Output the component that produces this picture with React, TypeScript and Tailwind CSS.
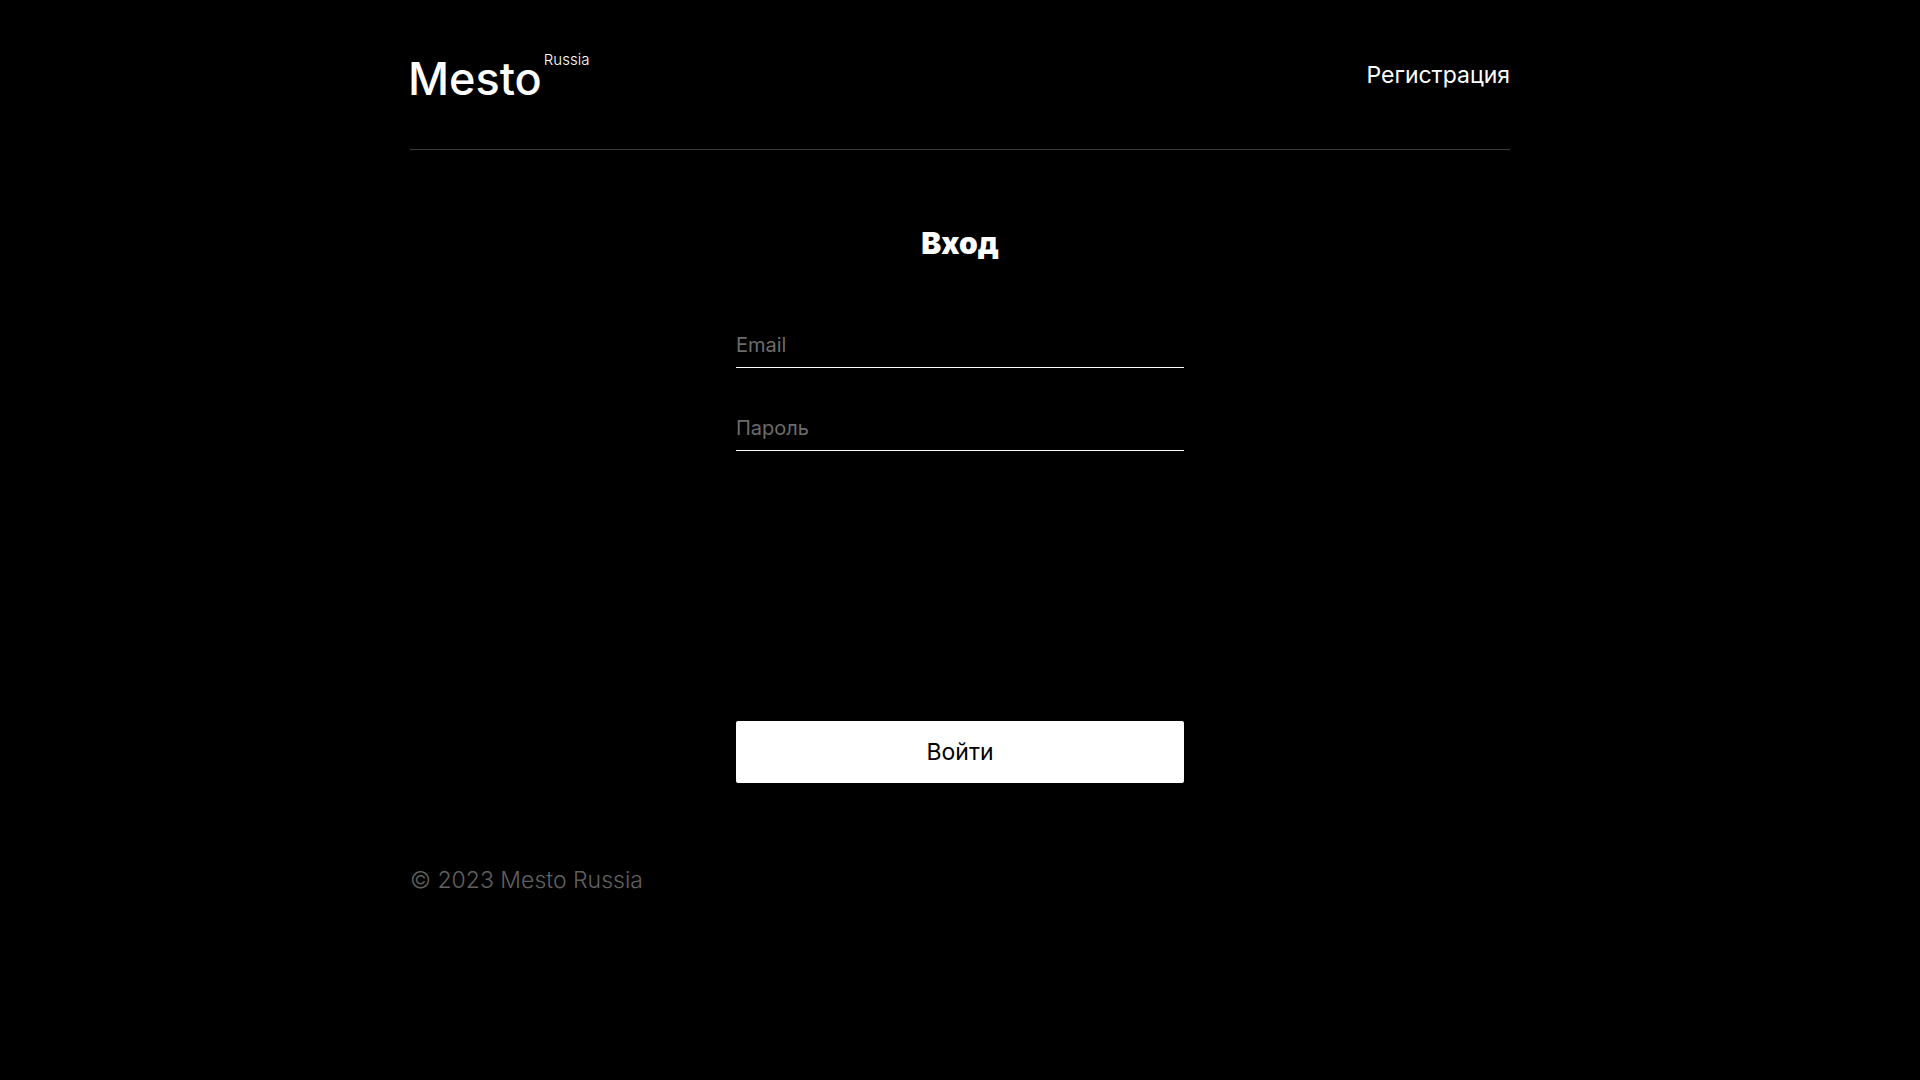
export default function App() {
  return (
    <div className="min-h-screen bg-black px-5 font-['Inter',sans-serif] text-white">
      <div className="mx-auto flex w-full max-w-[1100px] flex-col">
        <header className="flex items-start justify-between border-b border-[#545454]/70 pt-[45px] pb-[43px]">
          <a href="#" aria-label="Mesto Russia" className="-ml-0.5 flex items-start gap-0.5">
            <span className="pt-[7px] text-[45px] leading-[54px] font-[450]">Mesto</span>
            <span className="text-[15px] leading-[29px] font-light">Russia</span>
          </a>
          <a href="#register" className="pt-4 text-[23px] leading-7">Регистрация</a>
        </header>
        <main>
          <form className="mx-auto flex w-full max-w-[448px] flex-col pt-[75px]" onSubmit={(e) => e.preventDefault()}>
            <h1 className="text-center text-[30px] leading-9 font-black">Вход</h1>
            <input type="email" aria-label="Email" placeholder="Email" className="mt-[69px] h-[38px] w-full border-b border-white bg-transparent pb-2 text-xl outline-none placeholder:text-[#6c6c6c]" />
            <input type="password" aria-label="Пароль" placeholder="Пароль" className="mt-[45px] h-[38px] w-full border-b border-white bg-transparent pb-2 text-xl outline-none placeholder:text-[#6c6c6c]" />
            <button type="submit" className="mt-[270px] h-[62px] w-full rounded-xs bg-white text-[23px] leading-7 text-black">Войти</button>
          </form>
        </main>
        <footer className="pt-[83px] text-[23px] leading-7 font-light text-[#606060]">© 2023 Mesto Russia</footer>
      </div>
    </div>
  );
}
